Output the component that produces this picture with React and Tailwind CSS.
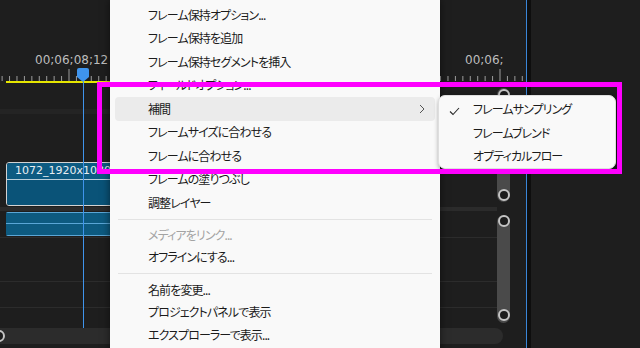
import React from "react";

const JP = "font-['Noto_Sans_CJK_JP','Noto_Sans',sans-serif] [font-feature-settings:'palt'] tracking-[-0.9px]";

function Ruler() {
  const step = 431 / 58;
  const ticks = [];
  for (let i = -9; i <= 62; i++) {
    const x = 69 + i * step;
    if (x < 0 || x > 526) continue;
    const tall = i === 0 || i === 58;
    ticks.push(
      <line
        key={i}
        x1={x}
        x2={x}
        y1={tall ? 1 : 8}
        y2={13}
        stroke="#9c9c9c"
        strokeWidth="1"
      />
    );
  }
  return (
    <svg width="526" height="13" className="block shrink-0">
      {ticks}
    </svg>
  );
}

function Knob() {
  return (
    <div className="w-[12px] h-[12px] rounded-full border-2 border-[#c4c4c4] bg-[#1c1c1c] shrink-0" />
  );
}

function MenuRow({ text, h, disabled, highlight, arrow }) {
  return (
    <div className={`${h} flex items-center mx-[5px] rounded-[4px] ${highlight ? "bg-[#ebebeb]" : ""}`}>
      <span className={`pl-[33px] ${disabled ? "text-[#a3a3a3]" : "text-[#1b1b1b]"}`}>{text}</span>
      {arrow && (
        <svg width="6" height="10" viewBox="0 0 6 10" className="ml-auto mr-[10px]">
          <path d="M1 1 L5 5 L1 9" fill="none" stroke="#555" strokeWidth="1" />
        </svg>
      )}
    </div>
  );
}

function Sep({ h }) {
  return (
    <div className={`${h} flex flex-col`}>
      <div className="h-[4px]" />
      <div className="h-[1px] mx-[8px] bg-[#e3e3e3]" />
    </div>
  );
}

export default function App() {
  return (
    <div className="relative w-[640px] h-[348px] overflow-hidden bg-[#1e1e1e] flex font-['DejaVu_Sans',sans-serif]">
      {/* Timeline */}
      <div className="w-[526px] h-full flex flex-col shrink-0">
        <div className="h-[53px] shrink-0" />
        <div className="h-[15px] shrink-0 flex text-[12px] leading-[15px] text-[#bdbdbd]">
          <div className="w-[465px] pl-[35px]">00;06;08;12</div>
          <div>00;06;</div>
        </div>
        <Ruler />
        <div className="h-[2px] shrink-0 flex">
          <div className="ml-[6px] w-[320px] bg-[#e6e600]" />
        </div>
        <div className="flex-1 flex">
          <div className="w-[497px] shrink-0 flex flex-col">
            <div className="h-[26px] shrink-0" />
            <div className="h-[5px] shrink-0 bg-[#242424]" />
            <div className="h-[48px] shrink-0" />
            <div className="h-[44px] shrink-0 flex">
              <div className="ml-[6px] w-[330px] rounded-[3px] border-[1.5px] border-[#d2d2d2] flex flex-col overflow-hidden">
                <div className="h-[17px] bg-[#0d5b82] border-b border-[#b9cfdb] text-[11px] leading-[16px] text-[#e8eef2] pl-[8px]">
                  1072_1920x1080
                </div>
                <div className="flex-1 bg-[#0a5378]" />
              </div>
            </div>
            <div className="h-[1px] shrink-0" />
            <div className="h-[4px] shrink-0 bg-[#2b2b2b]" />
            <div className="h-[1px] shrink-0" />
            <div className="h-[24px] shrink-0 flex">
              <div className="ml-[6px] w-[330px] flex flex-col rounded-[2px] overflow-hidden">
                <div className="h-[12px] bg-[#0d5a80] border-y border-[#5aa6d6]" />
                <div className="h-[12px] bg-[#0d5a80] border-b border-[#5aa6d6]" />
              </div>
            </div>
            <div className="h-[1px] shrink-0" />
            <div className="h-[1px] shrink-0 bg-[#2c2c2c]" />
            <div className="h-[43px] shrink-0" />
            <div className="h-[1px] shrink-0 bg-[#2c2c2c]" />
            <div className="h-[25px] shrink-0" />
            <div className="h-[1px] shrink-0 bg-[#2c2c2c]" />
            <div className="h-[20px] shrink-0" />
            <div className="h-[16px] shrink-0 w-[503px] bg-[#2c2c2c] rounded-r-[8px] flex items-center">
              <div className="-ml-[7px]">
                <Knob />
              </div>
            </div>
          </div>
          <div className="w-[13px] shrink-0 flex flex-col pt-[5px]">
            <div className="h-[114px] rounded-full bg-[#4a4a4a] flex flex-col items-center justify-between py-[1px]">
              <Knob />
              <Knob />
            </div>
            <div className="h-[13px]" />
            <div className="h-[108px] rounded-full bg-[#4a4a4a] flex flex-col items-center justify-between pt-[0px] pb-[2px]">
              <Knob />
              <Knob />
            </div>
          </div>
          <div className="flex-1" />
        </div>
      </div>
      <div className="w-[1px] shrink-0 bg-[#3a86d8]" />
      <div className="w-[4px] shrink-0 bg-[#0e0e0e]" />
      <div className="flex-1 bg-[#1e1e1e]" />

      {/* Playhead */}
      <svg width="14" height="16" className="absolute left-[76px] top-[67px]">
        <path d="M1 3 Q1 1 3 1 H11 Q13 1 13 3 V10 L7 15 L1 10 Z" fill="#3f94ec" />
      </svg>
      <div className="absolute left-[83px] top-[82px] w-[1px] h-[246px] bg-[#3f94ec]" />

      {/* Context menu */}
      <div className={`absolute left-[110px] top-0 w-[330px] h-[360px] bg-[#f9f9f9] shadow-[0_0_8px_rgba(0,0,0,0.55)] pt-[3px] text-[12px] ${JP}`}>
        <MenuRow h="h-[23.5px]" text="フレーム保持オプション..." />
        <MenuRow h="h-[23.5px]" text="フレーム保持を追加" />
        <MenuRow h="h-[23.5px]" text="フレーム保持セグメントを挿入" />
        <MenuRow h="h-[23.5px]" text="フィールドオプション..." />
        <MenuRow h="h-[23.5px]" text="補間" highlight arrow />
        <MenuRow h="h-[23.5px]" text="フレームサイズに合わせる" />
        <MenuRow h="h-[23.5px]" text="フレームに合わせる" />
        <MenuRow h="h-[23.5px]" text="フレームの塗りつぶし" />
        <MenuRow h="h-[23.5px]" text="調整レイヤー" />
        <Sep h="h-[9px]" />
        <MenuRow h="h-[22.5px]" text="メディアをリンク..." disabled />
        <MenuRow h="h-[22.5px]" text="オフラインにする..." />
        <Sep h="h-[10px]" />
        <MenuRow h="h-[22.5px]" text="名前を変更..." />
        <MenuRow h="h-[22.5px]" text="プロジェクトパネルで表示" />
        <MenuRow h="h-[22.5px]" text="エクスプローラーで表示..." />
      </div>

      {/* Submenu */}
      <div className={`absolute left-[438px] top-[95px] w-[178px] h-[74px] bg-[#f9f9f9] border border-[#dedede] rounded-[7px] shadow-[1px_2px_5px_rgba(0,0,0,0.45)] pt-[1.5px] text-[12px] text-[#1b1b1b] ${JP}`}>
        <div className="h-[23.5px] flex items-center relative">
          <svg width="11" height="9" viewBox="0 0 11 9" className="absolute left-[10px] top-[9px]">
            <path d="M1 4.5 L4 7.5 L10 1" fill="none" stroke="#2a2a2a" strokeWidth="1.1" />
          </svg>
          <span className="pl-[34px]">フレームサンプリング</span>
        </div>
        <div className="h-[23.5px] flex items-center">
          <span className="pl-[34px]">フレームブレンド</span>
        </div>
        <div className="h-[23.5px] flex items-center">
          <span className="pl-[34px]">オプティカルフロー</span>
        </div>
      </div>

      {/* Annotation */}
      <div className="absolute left-[97px] top-[82px] w-[525px] h-[92px] border-[5px] border-[#ff00ff]" />
    </div>
  );
}
